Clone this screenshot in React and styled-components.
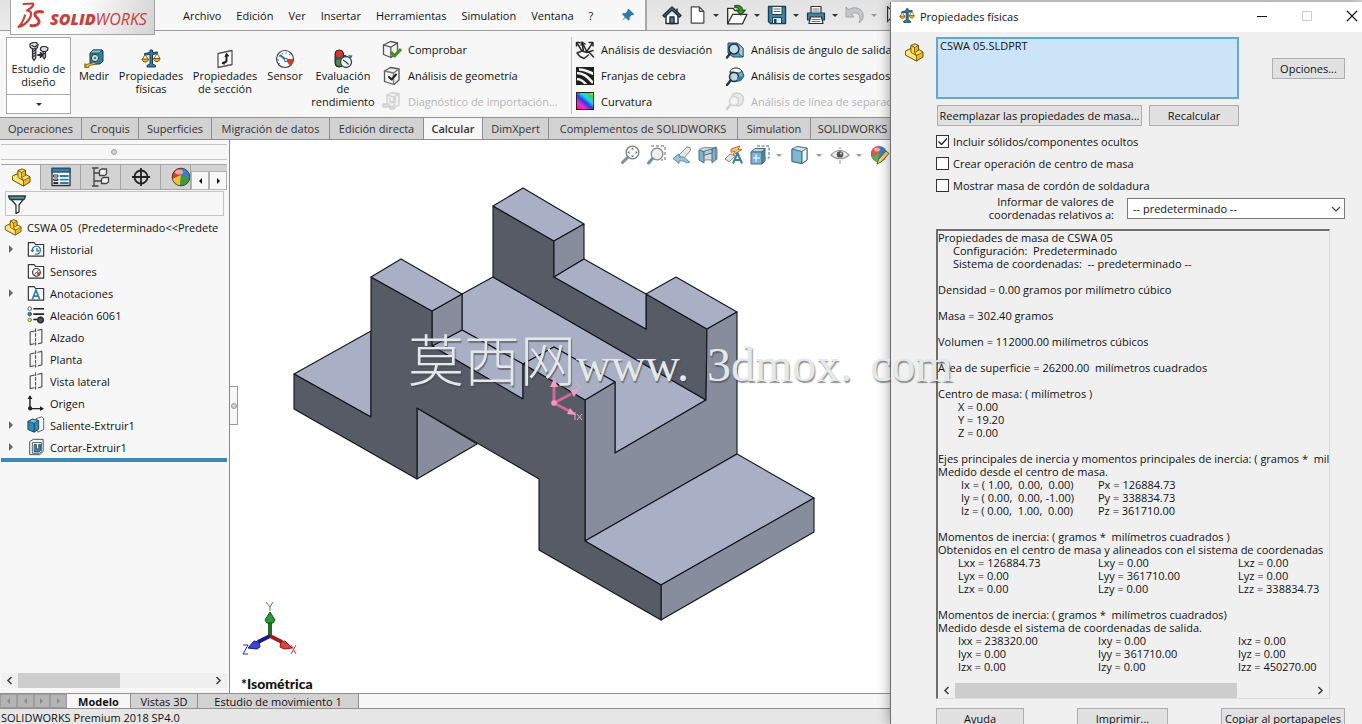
import React from "react";
import styled, { createGlobalStyle, css } from "styled-components";

const GlobalStyle = createGlobalStyle`
  *, *::before, *::after { box-sizing: border-box; }
  body {
    margin: 0;
    background: #fff;
    color: #111;
    font-family: "Open Sans", "Noto Sans", sans-serif;
    font-size: 11px;
    line-height: 13px;
  }
  button, input, select, textarea { font: inherit; color: inherit; margin: 0; }
`;

/* ---------- shared parts ---------- */

const PlainButton = styled.button`
  display: flex;
  align-items: center;
  justify-content: center;
  padding: 0;
  border: 0;
  background: none;
  white-space: nowrap;
`;

const IconSvg = styled.svg`
  display: block;
  flex: none;
  width: ${(p) => p.$size || 20}px;
  height: ${(p) => p.$size || 20}px;
  opacity: ${(p) => (p.$faded ? 0.3 : 1)};
`;

const S = { fill: "none", stroke: "#2b2f33", strokeWidth: 1.3, strokeLinejoin: "round", strokeLinecap: "round" };

const drawings = {
  bolts: (
    <g {...S} strokeWidth="1.2">
      <path fill="#ddd" d="M1 2l3-1.500h3L9 2.500 8.500 5.500 7 7H3.500L1 5z" />
      <path fill="#bbb" d="M3.500 7v9l1.500 2.500L6.800 16V7z" />
      <path d="M3.500 9.500l3-1M3.500 12l3-1M3.500 14.500l3-1M3 3.500l3 1.500 2-1.500" />
      <path strokeWidth="1.8" d="M9 13h4M11.500 11l2 2-2 2" />
      <path fill="#ddd" d="M11.500 6l2-1.500h3L19 6l-.5 2.500-2 1h-3l-2-1.500z" />
      <path fill="#bbb" d="M14 9.500V15l1.200 2 1.300-2V9.500zM14 12l2.500-.8" />
    </g>
  ),
  measure: (
    <g strokeLinejoin="round">
      <path fill="#2f7fa8" stroke="#163c55" d="M6 4l3-3h9l1 1v10l-3 3H6z" />
      <path fill="#7ec0dd" stroke="#163c55" strokeWidth=".7" d="M6 4l3-3h9l-2.500 3z" />
      <circle cx="11" cy="9" r="3.600" fill="#e9dfa6" stroke="#163c55" />
      <circle cx="11" cy="9" r="1.300" fill="#2f7fa8" />
      <path fill="#f0c937" stroke="#6b5510" strokeWidth=".8" d="M10 13.500L2 15.500v3.500l3-.8V16.500l8-1.500z" />
      <path fill="none" stroke="#6b5510" strokeWidth="1.200" d="M1 14.500V19" />
    </g>
  ),
  scales: (
    <g strokeLinejoin="round">
      <path fill="#2f7fa8" stroke="#163c55" d="M9 1h2.500v2.500l5-.5v1.500l-5 1V15l3 1.500V18H6v-1.500L9 15V5.500L3.500 6V4.500L9 3.500z" />
      <path fill="none" stroke="#7a5b11" strokeWidth=".9" d="M4 5.500L1.500 10M4 5.500L7 10M16 4.500L13 9.500M16 4.500L19 9.500" />
      <path fill="#f2b624" stroke="#7a4b08" d="M1 10h6.500c-.3 2-1.500 3-3.200 3S1.300 12 1 10zM12.500 9.500H19c-.3 2-1.500 3-3.200 3s-3-1-3.300-3z" />
    </g>
  ),
  section: (
    <g {...S}>
      <path fill="#fff" stroke="#555" d="M3 4.500L17 1.500v14L3 18.500z" />
      <path stroke="#222" strokeWidth="2" d="M11.500 6v5.500c0 1.500-1 2-3.500 2.500" />
      <path fill="#222" stroke="none" d="M11.500 3.500l2.800 3.800-5 .7zM6.500 14.200l3-2.300v4z" />
    </g>
  ),
  sensor: (
    <g>
      <circle cx="10" cy="10" r="8.500" fill="#fff" stroke="#3a4148" strokeWidth="1.200" />
      <path fill="#e0352b" d="M10 10l8.500 0a8.500 8.500 0 0 1-3.500 6.800z" />
      <path stroke="#3a4148" strokeWidth="1.200" strokeDasharray="1 2.800" fill="none" d="M4.500 15a7 7 0 1 1 11.500-8" />
      <path stroke="#2b6ea0" strokeWidth="2" d="M5 6l6 5" />
      <circle cx="11" cy="11" r="1.800" fill="#c8dcec" stroke="#2b6ea0" />
    </g>
  ),
  performance: (
    <g strokeLinejoin="round">
      <rect x="2" y="1" width="8.500" height="17" rx="4" fill="#4b4b4b" stroke="#222" />
      <circle cx="6.300" cy="5" r="3.400" fill="#d8352a" />
      <circle cx="6.300" cy="13.500" r="3.200" fill="#3f9a3a" />
      <path fill="#2b6ea0" d="M15 6l4.500.5-1.500 3z" />
      <circle cx="13" cy="13" r="5.500" fill="#eaf2f8" stroke="#39424a" strokeWidth="1.300" />
      <path stroke="#39424a" strokeWidth="1.200" fill="none" d="M13 13l-3-2M13 13l2.500 2.500M10 6.500h3" />
    </g>
  ),
  check: (
    <g {...S}>
      <path fill="#f4f4f4" stroke="#555" d="M1.500 5l7-3.500 7 1.500v9L9 17.500l-7.500-3z" />
      <path stroke="#555" d="M1.500 5l7.300 2.200L15.500 3M8.800 7.200V17" />
      <path stroke="#3f8f1d" strokeWidth="3" strokeLinecap="butt" d="M9 12l3.500 4L19 9" />
    </g>
  ),
  geometry: (
    <g {...S}>
      <path fill="#f2f2f2" stroke="#555" d="M2.500 5l6-3.500 8.500 1.500v11l-5 4.500-9.500-3z" />
      <path stroke="#777" d="M2.500 5l9 2L17 3M11.500 7v11" />
      <path stroke="#222" strokeWidth="2" d="M7 11l2.500 2.500 4.500-5" />
    </g>
  ),
  importDiag: (
    <g {...S} stroke="#777">
      <path fill="#ddd" d="M5 4l5-2.500 7 1.500v11l-5 3-7-2.500z" />
      <path d="M5 4l7 2 5-3M12 6v11M8 7v4h5V7" />
      <path fill="#aaa" d="M1 13h6v3H1zM8 15.500h3l1 2.500H8z" />
    </g>
  ),
  deviation: (
    <g {...S} strokeWidth="1.500" stroke="#2a2a2a">
      <path d="M2 13l5-2 5 1.500 6-2M5 16.500l4 2 4.500-3.500M7 11L2 3M8.500 11L7 3M12 12L8 4M11.500 12L17.500 3M5 16.500L2 13M14 12l4.500 5" />
      <path d="M1.500 6V2.500H5M6 5l1-3 3 2M14 2.500h4V6" />
    </g>
  ),
  zebra: (
    <g>
      <rect x="1" y="1" width="18" height="18" fill="#1d1d1d" />
      <g fill="none" stroke="#f3f3f3" strokeWidth="2.600">
        <path d="M4 3.500c5-.5 9 2 15 4.500M1.500 7C8 7 12 10 18 17M1.500 13c4 0 7 2 10 6" />
      </g>
      <rect x="1.500" y="1.500" width="17" height="17" fill="none" stroke="#222" />
    </g>
  ),
  curvature: (
    <g>
      <rect x="1" y="1" width="18" height="18" fill="url(#curv)" />
      <rect x="1.500" y="1.500" width="17" height="17" fill="none" stroke="#222" />
    </g>
  ),
  draft: (
    <g strokeLinejoin="round">
      <path fill="#5d9dbf" stroke="#1f4c67" d="M3 3h9l6 5v9H8l-5-4z" />
      <path fill="#a5d1e4" stroke="#1f4c67" strokeWidth=".8" d="M12 3l6 5v9l-4-3z" />
      <circle cx="9" cy="9" r="5" fill="#e3f1f8" fillOpacity=".75" stroke="#28323a" strokeWidth="1.500" />
      <path stroke="#28323a" strokeWidth="2.400" strokeLinecap="round" d="M5.500 13L2 17.500" />
    </g>
  ),
  undercut: (
    <g strokeLinejoin="round">
      <path fill="#7aa9c0" stroke="#28323a" d="M5 6c1-4 8-6 12-1l2 5-3 4-9 1z" />
      <path fill="#f2f5f7" stroke="#28323a" strokeWidth=".8" d="M5 6c1-4 8-6 12-1l-3 2-6-1z" />
      <circle cx="9" cy="11" r="4.500" fill="#cfe5ef" fillOpacity=".8" stroke="#28323a" strokeWidth="1.500" />
      <path fill="#2f7fa8" d="M12 11l7-1-3 5-4 1z" />
      <path stroke="#28323a" strokeWidth="2.400" strokeLinecap="round" d="M5.500 14.500L2 19" />
    </g>
  ),
  parting: (
    <g {...S} stroke="#777" strokeWidth="1.500">
      <path fill="#ccc" d="M7 5c2-4 9-4 11 1 1 4-1 8-4 9l-4-1" />
      <circle cx="9" cy="10" r="4.500" fill="#eee" />
      <path strokeWidth="2.400" d="M5.500 13.500L2 18" />
    </g>
  ),
  home: (
    <g {...S} stroke="#1f2a33" strokeWidth="1.400">
      <path fill="#fff" d="M4 10v8.500h12V10" />
      <path fill="#3d85ab" d="M1 10.500L10 2l9 8.500-1.500 1.500L10 5l-7.500 7z" />
      <path d="M15 4v3" />
      <path fill="#3d85ab" d="M8 12h4v6.500H8z" />
    </g>
  ),
  doc: <path {...S} fill="#fff" stroke="#444" d="M2.500 1h9l5 5v13h-14zM11.500 1v5h5" />,
  open: (
    <g {...S} strokeWidth="1.200">
      <path fill="#f8f8f0" d="M1.500 18V4h5l1.500 2h6v4" />
      <path fill="#fff" d="M1.500 18L6 9.500h13L15 18z" />
      <path fill="#3f9a2b" stroke="#245e17" d="M8 1.500c4-1 7 1 7 4h2.500L13.500 10 9.500 5.500H12c0-1.500-1.500-2.500-4-2.500z" />
    </g>
  ),
  save: (
    <g strokeLinejoin="round">
      <path fill="#3d85ab" stroke="#1b3d52" strokeWidth="1.400" d="M1.500 1.500h17v17H3.500l-2-2z" />
      <path fill="#fff" stroke="#1b3d52" d="M5 1.500h10v8H5z" />
      <path stroke="#666" d="M6.500 4h7M6.500 6.500h7" />
      <path fill="#dde8ee" stroke="#1b3d52" d="M5.500 12.500h9v6h-9z" />
      <path fill="#1b3d52" d="M7 14h2.500v4.500H7z" />
    </g>
  ),
  print: (
    <g {...S} strokeWidth="1.200">
      <path fill="#fff" d="M5 8V1.500h10V8" />
      <path fill="#3d85ab" stroke="#1b3d52" d="M1.500 8h17v7h-17z" />
      <path fill="#fff" d="M4.500 12h11l1.500 6.500H3z" />
      <path stroke="#777" d="M6 14.500h8M6 16.500h8M7 4h6M7 6h6" />
    </g>
  ),
  undo: <path fill="#c3c7ca" stroke="#999" strokeWidth=".8" d="M1 2l3 2.500C9 1 17 3 18 9c.8 4-1 7-4 9 2-4 1-9-3-10-2-.5-3 0-4.500 1L9 12H1z" />,
  cursor: <path fill="#fff" stroke="#333" strokeWidth="1.300" d="M4 1v16l4-4 3 6 2-1-3-6h6z" />,
  pin: <path fill="#2f7bab" d="M11 1l8 8-2 1.500-1.500-.5-3.500 3.500.5 3-2 1.500-4-4-6 5 5-6-4-4L3 7l3 .5L9.500 4 9 2.500z" />,
  part: (
    <g strokeLinejoin="round" stroke="#6e5004">
      <path fill="#f0b71c" d="M1.500 9L7 6.500V3.500L11 2l3.500 1.500v5l1-.5 3.500 2v5L12.500 19 1.500 13z" />
      <path fill="#ffe57d" strokeWidth=".8" d="M7 3.500L11 2l3.500 1.500L10.500 5.500zM10.500 10.500L15.500 8 19 10l-6.500 3.500zM1.500 9L7 6.500v2.500l5.500 4.500V19L1.500 13z" />
      <path fill="#ffd84a" strokeWidth=".8" d="M7 3.500l3.500 2v5l2 3L7 10.500z" />
    </g>
  ),
  props: (
    <g {...S} strokeWidth="1.300">
      <path fill="#fff" d="M1 1.500h18v17H1z" />
      <path fill="#3d85ab" stroke="#24587a" d="M1 1.500h18V5H1z" />
      <path strokeWidth="1" d="M3 8h4v2H3zM3 12h4v1.500H3zM3 15.500h4v1H3z" />
      <path stroke="#2f7bab" strokeWidth="1.800" d="M9.500 9H17M9.500 12.700H17M9.500 16H17" />
    </g>
  ),
  config: (
    <g {...S} stroke="#444">
      <path d="M3 1v18M1.500 1H7M1.500 19H7M3 6h6M3 14h7" />
      <path fill="#f4f4f4" d="M8.500 3.500l2-1.500h5v5l-2 1.500h-5zM10.500 12l2-1.500h5V15l-2 1.500h-5z" />
    </g>
  ),
  target: (
    <g fill="none" stroke="#222" strokeWidth="1.800">
      <circle cx="10" cy="10" r="6.500" />
      <path d="M10 1v18M1 10h18" />
    </g>
  ),
  appearance: (
    <g>
      <circle cx="10" cy="10" r="9" fill="#3d7fc4" />
      <path fill="#dd3b2c" d="M10 1a9 9 0 0 0-8.800 11L10 8z" />
      <path fill="#f2c232" d="M10 8l-1 11A9 9 0 0 1 1.200 12z" />
      <path fill="#3f9a3a" d="M10 8l8.800 3.500A9 9 0 0 1 9 19z" />
      <ellipse cx="8" cy="5" rx="4" ry="2.500" fill="#fff" opacity=".55" />
      <circle cx="10" cy="10" r="8.800" fill="none" stroke="#333" strokeWidth=".8" />
    </g>
  ),
  scenePaint: (
    <g strokeLinejoin="round">
      <circle cx="9" cy="9" r="8" fill="#3d7fc4" />
      <path fill="#dd5548" d="M9 1a8 8 0 0 0-7.500 11L9 8z" />
      <path fill="#5fae4c" d="M9 8L8 17a8 8 0 0 1-6.500-5z" />
      <ellipse cx="7" cy="4.500" rx="3" ry="2" fill="#fff" opacity=".5" />
      <path fill="#f3d67c" stroke="#7a5b11" d="M7 19l1.500-4.500L16 6l3 2.500-8 8.500z" />
    </g>
  ),
  filter: (
    <g {...S} stroke="#333">
      <path fill="#fff" d="M2 3h16l-6 8v7l-3 1.500V11z" />
      <path fill="#3aa0b8" d="M1.500 2h17l-1.500 3.500H3z" />
    </g>
  ),
  folder: <path {...S} fill="#fbfbfb" stroke="#333" d="M1.500 18V3H8l1.500 2h9v13z" />,
  material: (
    <g {...S}>
      <path stroke="#222" strokeWidth="1.800" strokeLinecap="butt" d="M7 3h12M7 9h12M7 15h5" />
      <circle cx="3" cy="3" r="2" fill="#fff" stroke="#555" strokeWidth="1" />
      <circle cx="3" cy="9" r="2" fill="#3d85ab" stroke="#24587a" strokeWidth="1" />
      <circle cx="3" cy="15.500" r="2" fill="#f2dd5a" stroke="#8a7a14" strokeWidth="1" />
      <circle cx="15" cy="15.500" r="3" fill="#555" stroke="#333" strokeDasharray="1.500 1" strokeWidth="2" />
    </g>
  ),
  plane: (
    <g {...S} stroke="#555">
      <path d="M3.500 4.500L8 3.500M12 2.500l4.500-1v15l-4 1M8 17.500l-4.500 1v-14" />
      <path strokeDasharray="3 2.200" d="M9.500 1v18" />
    </g>
  ),
  origin: (
    <g fill="#222">
      <path d="M2.500 4h1.600v11.500H15V17H2.500zM3.300 1L6 5.500H.6zM19 16.300L14.500 19v-5.400z" />
      <circle cx="3.500" cy="16" r="2.300" />
    </g>
  ),
  extrude: (
    <g strokeLinejoin="round">
      <path fill="#fff" stroke="#555" d="M10 3l6-2 2.500 1.500V15L12 18z" />
      <path fill="#2f88b5" stroke="#163c55" d="M1 6l5-2.500 7 1.500v9.500L8 18l-7-3z" />
      <path fill="#77bedb" stroke="#163c55" strokeWidth=".7" d="M1 6l5-2.500L13 5 8 8z" />
      <path stroke="#163c55" d="M8 8v10" />
    </g>
  ),
  cut: (
    <g strokeLinejoin="round">
      <path fill="#eef3f6" stroke="#444" d="M3 4l4-2.500h11V15l-4 3.500H3z" />
      <path fill="#fff" stroke="#555" d="M6 5h10v10l-2 2H6z" />
      <path fill="#2f88b5" stroke="#163c55" strokeWidth=".8" d="M8 7h2.500v5h2.500V7h2v7l-1.500 1.500H8z" />
    </g>
  ),
  zoomFit: (
    <g>
      <circle cx="12.500" cy="7.500" r="6.300" fill="#fff" stroke="#777" strokeWidth="1.300" />
      <path fill="#666" d="M12.500 2.500l1.500 2h-3zM12.500 12.500l1.500-2h-3zM7.500 7.500l2-1.500v3zM17.500 7.500l-2-1.500v3z" />
      <path stroke="#6b93ab" strokeWidth="3" strokeLinecap="round" d="M7.500 12.500L2.500 17.500" />
    </g>
  ),
  zoomArea: (
    <g>
      <path fill="none" stroke="#666" strokeDasharray="3 2" d="M5 1h14v14h-4" />
      <circle cx="11" cy="9" r="5.800" fill="#eee" stroke="#888" strokeWidth="1.300" />
      <path stroke="#6b93ab" strokeWidth="3" strokeLinecap="round" d="M6.500 13.500L2.500 18" />
    </g>
  ),
  prev: (
    <g strokeLinejoin="round">
      <path fill="#e6e6e6" stroke="#888" d="M7 10l8-8 3 .5.5 3L11 14z" />
      <path fill="#9cc4d9" stroke="#5e8ba3" d="M1 13.500l6-4.500v3c4-.5 7 .5 9 4l2 1-3.500 1c-2-2-4-2.500-7.500-2v2.500z" />
    </g>
  ),
  sectionView: (
    <g strokeLinejoin="round" stroke="#4f6f82">
      <path fill="#d9d9d9" stroke="#888" d="M2 4c5-3 11 0 16-2l1 2v10c-5 3-9-1-14 2z" />
      <path fill="#7fb2cc" d="M1 5l5 1.500V18l-5-3zM14 4l4-1.500v12L14 18z" />
      <path fill="#a9cfe2" d="M6 6.500c3-1.500 5-1.500 8-2.500v4c-3 1-5 1-8 2.500z" />
    </g>
  ),
  annotate: (
    <g strokeLinejoin="round">
      <path fill="#f4c27a" stroke="#b87424" d="M7 4l9-3-2 3.500h4L9 10l2-4-4 1.500z" />
      <path fill="#e3e3e3" stroke="#888" d="M1 14l5-5 5 2-6 6z" />
      <path fill="none" stroke="#3c7ca3" strokeWidth="2" d="M9 18.500L13.500 8 18 18.500M10.500 15h6" />
    </g>
  ),
  orient: (
    <g strokeLinejoin="round" stroke="#4a6b7e">
      <path fill="#fff" strokeDasharray="3 1.500" d="M7 1h12v12h-5" />
      <path fill="#b7d8e8" d="M1 7l4-3.500h10L12 7z" />
      <path fill="#7fb3cd" d="M1 7h11v12H1z" />
      <path fill="#4d89a8" d="M12 7l3-3.500V16l-3 3z" />
      <path fill="none" stroke="#fff" d="M6 9v8M3 13h7" />
    </g>
  ),
  display: (
    <g strokeLinejoin="round" stroke="#4a6b7e">
      <path fill="#cfe4ef" d="M2 4l5-2.500 10 1.500v12l-5 3.500-10-2z" />
      <path fill="#7fb6d1" d="M2 4l10 2.500v12l-10-2z" />
      <path fill="#eef6fa" d="M12 6.500L17 3v12l-5 3.500z" />
    </g>
  ),
  eye: (
    <g>
      <path fill="#eee" stroke="#999" strokeWidth="1.200" d="M1 10c5-6 13-6 18 0-5 5-13 5-18 0z" />
      <path stroke="#999" d="M10 2v2M10 15v4" />
      <circle cx="10" cy="9.500" r="3.300" fill="#555" />
      <circle cx="11" cy="8.500" r="1" fill="#ddd" />
    </g>
  ),
};

function Icon({ name, size, faded, children }) {
  return (
    <IconSvg viewBox="0 0 20 20" $size={size} $faded={faded} aria-hidden="true">
      {name === "curvature" && (
        <defs>
          <linearGradient id="curv" x1="0" y1="1" x2=".85" y2="0">
            <stop offset=".05" stopColor="#ff1a1a" />
            <stop offset=".28" stopColor="#ff2ad0" />
            <stop offset=".5" stopColor="#2c3ce0" />
            <stop offset=".68" stopColor="#1fd7e8" />
            <stop offset=".88" stopColor="#37d64a" />
            <stop offset="1" stopColor="#c9e83a" />
          </linearGradient>
        </defs>
      )}
      {drawings[name]}
      {children}
    </IconSvg>
  );
}

const Caret = styled.span`
  flex: none;
  width: 0;
  height: 0;
  border: 3px solid transparent;
  border-top-color: ${(p) => (p.$faded ? "#999" : "#333")};
  border-bottom-width: 0;
`;

/* ---------- title bar ---------- */

const Desktop = styled.div`
  position: relative;
  display: flex;
  flex-direction: column;
  height: 100vh;
  overflow: hidden;
`;

const TitleBar = styled.header`
  display: flex;
  height: 31px;
  padding-left: 10px;
  background: linear-gradient(#e2e2e2, #ebebeb);
  border-bottom: 1px solid #9b9b9b;
`;

const LogoTab = styled.div`
  position: relative;
  z-index: 1;
  width: 145px;
  height: 35px;
  flex: none;
  display: flex;
  align-items: center;
  gap: 6px;
  padding: 0 5px 4px 6px;
  background: linear-gradient(105deg, #fff 45%, #d4d4d4);
  border: solid #a5a5a5;
  border-width: 0 1px 1px;
`;

const DsMark = styled.svg`
  width: 27px;
  height: 29px;
  flex: none;
`;

const Brand = styled.span`
  padding-top: 8px;
  color: #c5413b;
  font: italic 400 16px/20px "Open Sans", sans-serif;
  b { font-weight: 800; }
`;

const MenuBar = styled.nav`
  display: flex;
  align-items: center;
  gap: 15px;
  padding: 0 10px 0 28px;
  background: #f7f7f7;
  border-right: 2px solid #a9a9a9;
`;

const PinButton = styled(PlainButton)`
  margin-left: 13px;
`;

const QuickTools = styled.div`
  display: flex;
  align-items: center;
  gap: 7px;
  padding-left: 15px;
`;

const QuickTool = styled(PlainButton)`
  gap: 6px;
`;

/* ---------- ribbon ---------- */

const Ribbon = styled.section`
  display: flex;
  height: 86px;
  flex: none;
  padding: 6px 0 3px 6px;
  background: #f7f7f7;
  overflow: hidden;
`;

const StudyButton = styled.div`
  display: flex;
  flex-direction: column;
  width: 65px;
  flex: none;
  background: #fff;
  border: 1px solid #a9a9a9;
`;

const StudyMain = styled(PlainButton)`
  flex: 1;
  flex-direction: column;
  padding-bottom: 2px;
  white-space: normal;
`;

const StudyDrop = styled(PlainButton)`
  height: 19px;
  border-top: 1px solid #a9a9a9;
`;

const BigTool = styled(PlainButton)`
  flex: none;
  flex-direction: column;
  justify-content: flex-start;
  width: ${(p) => p.$w}px;
  padding-top: 12px;
  white-space: pre-line;
`;

const ToolColumn = styled.div`
  display: flex;
  flex: none;
  flex-direction: column;
  width: ${(p) => p.$w}px;
  padding-left: ${(p) => (p.$line ? 3 : 0)}px;
  border-left: 1px solid ${(p) => (p.$line ? "#c4c4c4" : "transparent")};
`;

const SmallTool = styled(PlainButton)`
  height: 26px;
  justify-content: flex-start;
  gap: 6px;
  color: ${(p) => (p.disabled ? "#b5b5b5" : "inherit")};
`;

const TabStrip = styled.nav`
  display: flex;
  flex: none;
  height: 23px;
  background: #d2d2d2;
  border: solid #8f8f8f;
  border-width: 1px 0;
  overflow: hidden;
`;

const RibbonTab = styled(PlainButton)`
  flex: none;
  width: ${(p) => p.$w}px;
  color: #333;
  border-right: 1px solid #8f8f8f;
  ${(p) => p.$active && css`background: #f7f7f7; font-weight: 600;`}
`;

/* ---------- feature tree ---------- */

const Main = styled.main`
  display: flex;
  flex: 1;
  min-height: 0;
`;

const SidePanel = styled.aside`
  display: flex;
  flex-direction: column;
  width: 230px;
  flex: none;
  padding: 4px 2px 5px 1px;
  background: #f7f7f7;
  border-right: 1px solid #8a8a8a;
`;

const PanelGrip = styled.div`
  display: flex;
  align-items: center;
  justify-content: center;
  height: 16px;
  margin-bottom: 4px;
  border: solid #c4c4c4;
  border-width: 1px 0;
`;

const Dot = styled.span`
  width: 6px;
  height: 6px;
  border: 1px solid #9a9a9a;
  border-radius: 50%;
  background: #d5d5d5;
`;

const PanelTabs = styled.div`
  display: flex;
  height: 26px;
  background: #d2d2d2;
  border-top: 1px solid #a5a5a5;
`;

const PanelTab = styled(PlainButton)`
  width: 40px;
  flex: none;
  border-right: 1px solid #a5a5a5;
  border-bottom: 1px solid ${(p) => (p.$active ? "#f7f7f7" : "#a5a5a5")};
  background: ${(p) => (p.$active ? "#f7f7f7" : "#d2d2d2")};
  ${(p) => p.$clipped && css`
    flex: 1;
    min-width: 0;
    justify-content: flex-start;
    padding-left: 10px;
    overflow: hidden;
  `}
`;

const PanelArrow = styled(PlainButton)`
  width: 18px;
  flex: none;
  align-self: flex-end;
  height: 19px;
  background: #f7f7f7;
  border: 1px solid #b0b0b0;
`;

const SideCaret = styled.span`
  width: 0;
  height: 0;
  border: ${(p) => p.$s || 3}px solid transparent;
  ${(p) => (p.$left
    ? css`border-left-width: 0; border-right-color: ${p.$c || "#111"};`
    : css`border-right-width: 0; border-left-color: ${p.$c || "#111"};`)}
`;

const FilterBox = styled.label`
  display: flex;
  align-items: center;
  height: 25px;
  margin: 1px 3px 0 4px;
  padding: 0 1px;
  border: 1px solid #c4c4c4;
  input {
    flex: 1;
    min-width: 0;
    border: 0;
    background: none;
    outline: 0;
  }
`;

const Tree = styled.ul`
  margin: 0;
  padding: 0;
  list-style: none;
  border-bottom: 4px solid #3d89b5;
`;

const TreeRow = styled.li`
  display: flex;
  align-items: center;
  height: 22px;
  gap: 5px;
  padding-left: ${(p) => (p.$root ? 3 : 8)}px;
  white-space: pre;
  overflow: hidden;
`;

const Twisty = styled.span`
  display: flex;
  width: 13px;
  flex: none;
`;

const Spacer = styled.div`
  flex: 1;
`;

const ScrollBar = styled.div`
  display: flex;
  align-items: center;
  flex: none;
  height: 15px;
  background: #f0f0f0;
`;

const ScrollArrow = styled(PlainButton)`
  width: 17px;
  height: 15px;
  svg { width: 9px; height: 9px; }
`;

const ScrollTrack = styled.div`
  flex: 1;
  height: 15px;
`;

const ScrollThumb = styled.div`
  width: ${(p) => p.$w}%;
  height: 100%;
  background: #cdcdcd;
`;

function HScroll({ thumb }) {
  return (
    <ScrollBar>
      <ScrollArrow aria-label="Izquierda">
        <svg viewBox="0 0 9 9" fill="none" stroke="#444" strokeWidth="1.600"><path d="M6.500 1L3 4.500 6.500 8" /></svg>
      </ScrollArrow>
      <ScrollTrack><ScrollThumb $w={thumb} /></ScrollTrack>
      <ScrollArrow aria-label="Derecha">
        <svg viewBox="0 0 9 9" fill="none" stroke="#444" strokeWidth="1.600"><path d="M2.500 1L6 4.500 2.500 8" /></svg>
      </ScrollArrow>
    </ScrollBar>
  );
}

/* ---------- viewport ---------- */

const Viewport = styled.section`
  position: relative;
  flex: 1;
  min-width: 0;
  overflow: hidden;
  background: #fff;
`;

const Scene = styled.svg`
  display: block;
  width: 660px;
  height: 554px;
`;

const ViewTools = styled.div`
  position: absolute;
  top: 5px;
  left: 390px;
  display: flex;
  align-items: center;
  gap: 6px;
`;

const ViewTool = styled(PlainButton)`
  gap: 6px;
  ${(p) => p.$drop && css`margin-right: 2px;`}
`;

const SplitHandle = styled.div`
  position: absolute;
  top: 246px;
  left: 0;
  display: flex;
  align-items: center;
  justify-content: center;
  width: 8px;
  height: 39px;
  background: #f7f7f7;
  border: 1px solid #9a9a9a;
  border-left: 0;
`;

const ViewName = styled.div`
  position: absolute;
  left: 11px;
  bottom: 1px;
  color: #111;
  font: 900 14px/16px Lato, sans-serif;
`;

/* ---------- bottom strips ---------- */

const SheetStrip = styled.nav`
  display: flex;
  flex: none;
  height: 16px;
  background: #f7f7f7;
  border: solid #8f8f8f;
  border-width: 1px 0;
`;

const SheetNav = styled.div`
  display: flex;
  width: 67px;
  background: #b4b4b4;
`;

const SheetNavButton = styled(PlainButton)`
  flex: 1;
  border: 1px solid #9d9d9d;
`;

const SheetTab = styled(PlainButton)`
  width: ${(p) => p.$w}px;
  background: ${(p) => (p.$active ? "#f7f7f7" : "#d2d2d2")};
  font-weight: ${(p) => (p.$active ? 700 : 400)};
  border-right: 1px solid #8f8f8f;
`;

const StatusBar = styled.footer`
  flex: none;
  height: 15px;
  padding: 2px 1px 0;
  background: #e6e6e6;
  white-space: nowrap;
`;

/* ---------- mass properties dialog ---------- */

const Dialog = styled.section`
  position: absolute;
  top: 2px;
  right: 0;
  bottom: 0;
  display: flex;
  flex-direction: column;
  width: 472px;
  max-width: 100%;
  overflow: hidden;
  background: #f0f0f0;
  border-left: 1px solid #6f6f6f;
  box-shadow: 0 0 12px rgba(0, 0, 0, 0.4);
`;

const DialogTitle = styled.header`
  display: flex;
  align-items: center;
  height: 30px;
  flex: none;
  gap: 5px;
  padding: 0 3px 2px 8px;
  background: #fff;
  h1 {
    flex: 1;
    margin: 0;
    font-size: 11px;
    font-weight: 400;
  }
`;

const WindowButton = styled(PlainButton)`
  width: 14px;
  margin-left: 26px;
  svg { width: 12px; height: 12px; }
`;

const DialogBody = styled.div`
  display: grid;
  grid-template-columns: 45px minmax(0, 1fr);
  align-content: start;
  flex: 1;
  min-height: 0;
  padding-top: 5px;
`;

const PartCell = styled.div`
  padding: 5px 0 0 13px;
`;

const DialogForm = styled.div`
  display: flex;
  flex-direction: column;
  padding-right: 17px;
`;

const FileRow = styled.div`
  display: flex;
  align-items: center;
  justify-content: space-between;
`;

const FileBox = styled.textarea`
  display: block;
  width: 303px;
  height: 62px;
  padding: 0 2px;
  resize: none;
  outline: 0;
  background: #cce4f7;
  border: 2px solid #61a9d2;
  border-radius: 0;
`;

const PushButton = styled(PlainButton)`
  width: ${(p) => p.$w}px;
  height: 21px;
  background: #e1e1e1;
  border: 1px solid #adadad;
`;

const ButtonRow = styled.div`
  display: flex;
  gap: 7px;
  padding: 6px 0 4px 1px;
`;

const CheckLabel = styled.label`
  display: flex;
  align-items: center;
  gap: 4px;
  height: 22px;
`;

const CheckBox = styled.input`
  appearance: none;
  width: 13px;
  height: 13px;
  border: 1px solid #333;
  background: #fff;
`;

const CheckWrap = styled.span`
  position: relative;
  display: flex;
  svg {
    position: absolute;
    inset: 0;
    width: 13px;
    height: 13px;
    pointer-events: none;
  }
`;

const CoordRow = styled.label`
  display: flex;
  align-items: center;
  justify-content: flex-end;
  gap: 13px;
  height: 24px;
  text-align: right;
  white-space: pre-line;
`;

const SelectWrap = styled.span`
  position: relative;
  display: flex;
  width: 218px;
  svg {
    position: absolute;
    right: 4px;
    top: 6px;
    width: 10px;
    height: 10px;
    pointer-events: none;
  }
`;

const Select = styled.select`
  appearance: none;
  width: 100%;
  height: 21px;
  padding: 0 5px;
  background: #fff;
  border: 1px solid #7a7a7a;
  border-radius: 0;
`;

const ReportBox = styled.div`
  display: flex;
  flex-direction: column;
  height: 470px;
  margin: 9px 15px 0 0;
  border: 1px solid #dcdcdc;
  border-top: 2px solid #6d6d6d;
  border-left: 2px solid #6d6d6d;
`;

const ReportText = styled.div`
  flex: 1;
  min-height: 0;
  overflow: hidden;
  white-space: pre;
`;

const Line = styled.p`
  height: 13px;
  margin: 0;
  padding-left: ${(p) => p.$in || 0}px;
`;

const Matrix = styled.table`
  border-collapse: collapse;
  margin-left: ${(p) => p.$left || 20}px;
  td {
    width: ${(p) => p.$col || 140}px;
    height: 13px;
    padding: 0;
  }
  td:last-child { width: 90px; }
`;

const DialogButtons = styled.div`
  display: flex;
  justify-content: space-between;
  padding-top: 9px;
`;

const Watermark = styled.div`
  position: absolute;
  top: 325px;
  left: 408px;
  display: flex;
  align-items: baseline;
  color: #e4e8e8;
  font: 48px/64px "Liberation Serif", serif;
  text-shadow: 1px 2px 1px rgba(70, 72, 76, 0.6);
  white-space: nowrap;
  pointer-events: none;
  b { font: 300 56px/64px "Noto Sans CJK SC", sans-serif; }
`;

const SiteName = styled.span`
  display: flex;
  gap: 18px;
`;

/* ---------- data ---------- */

const menus = ["Archivo", "Edición", "Ver", "Insertar", "Herramientas", "Simulation", "Ventana", "?"];

const quick = [
  ["home", 20, false], ["doc", 18, true], ["open", 22, true], ["save", 20, true],
  ["print", 20, true], ["undo", 20, true], ["cursor", 18, false],
];

const bigTools = [
  ["measure", "Medir", 46],
  ["scales", "Propiedades\nfísicas", 68],
  ["section", "Propiedades\nde sección", 80],
  ["sensor", "Sensor", 40],
  ["performance", "Evaluación\nde\nrendimiento", 76],
];

const smallTools = [
  [190, false, [["check", "Comprobar"], ["geometry", "Análisis de geometría"], ["importDiag", "Diagnóstico de importación...", true]]],
  [153, true, [["deviation", "Análisis de desviación"], ["zebra", "Franjas de cebra"], ["curvature", "Curvatura"]]],
  [220, false, [["draft", "Análisis de ángulo de salida"], ["undercut", "Análisis de cortes sesgados"], ["parting", "Análisis de línea de separación", true]]],
];

const ribbonTabs = [
  ["Operaciones", 82], ["Croquis", 57], ["Superficies", 73], ["Migración de datos", 118],
  ["Edición directa", 94], ["Calcular", 59], ["DimXpert", 66], ["Complementos de SOLIDWORKS", 189],
  ["Simulation", 73], ["SOLIDWORKS MBD", 112],
];

const folderMark = {
  history: <g fill="none" stroke="#2f7bab" strokeWidth="1.500"><path d="M6 12a4.500 4.500 0 1 1 3 3.500M11 9v3h2.500" /><path fill="#2f7bab" stroke="none" d="M3.500 11h5L6 14z" /></g>,
  sensor: <g><circle cx="10.500" cy="11.500" r="4.300" fill="#fff" stroke="#333" strokeWidth="1.300" /><path fill="#d8352a" d="M10.500 11.500h4.300a4.300 4.300 0 0 1-2.500 4z" /><path stroke="#333" d="M8 14l5-5" /></g>,
  notes: <path fill="none" stroke="#2f7bab" strokeWidth="1.800" d="M6 17l4-10.500L14 17M7.500 13.500h5" />,
};

const treeRows = [
  ["folder", "Historial", true, "history"],
  ["folder", "Sensores", false, "sensor"],
  ["folder", "Anotaciones", true, "notes"],
  ["material", "Aleación 6061"],
  ["plane", "Alzado"],
  ["plane", "Planta"],
  ["plane", "Vista lateral"],
  ["origin", "Origen"],
  ["extrude", "Saliente-Extruir1", true],
  ["cut", "Cortar-Extruir1", true],
];

const viewTools = [
  ["zoomFit"], ["zoomArea"], ["prev"], ["sectionView"], ["annotate"],
  ["orient", true], ["display", true], ["eye", true], ["scenePaint"],
];

const LIGHT = "#a9b0c5";
const MID = "#878d9d";
const DARK = "#575b66";

const faces = [
  [LIGHT, "294,374 371,331 371,417"],
  [MID, "417,408 477,444 417,479"],
  [LIGHT, "493,277 706,400 615,453 615,382 554,347 523,364 462,330 462,294"],
  [DARK, "493,206 554,241 554,277 646,329 646,294 707,329 706,400 493,277"],
  [LIGHT, "493,206 523,188 584,224 554,241"],
  [MID, "554,241 584,224 584,259 554,277"],
  [LIGHT, "554,277 584,259 646,294 646,329"],
  [LIGHT, "646,294 676,277 737,312 707,329"],
  [MID, "585,400 615,382 615,453 706,400 707,329 737,312 737,454 585,541"],
  [LIGHT, "585,541 737,454 814,498 661,585"],
  [MID, "661,585 814,498 814,532 661,620"],
  [LIGHT, "432,346 462,330 523,364 523,399"],
  [MID, "432,311 462,294 462,330 432,346"],
  [LIGHT, "523,364 554,347 615,382 585,400"],
  [DARK, "371,277 432,311 432,346 523,399 523,364 585,400 585,541 661,585 661,620 539,550 539,479 417,408 417,479 294,409 294,374 371,417"],
  [LIGHT, "371,277 401,259 462,294 432,311"],
];

function Model() {
  return (
    <Scene viewBox="230 140 660 554" role="img" aria-label="CSWA 05">
      <g stroke="#12151c" strokeWidth="1.100" strokeLinejoin="round">
        {faces.map(([fill, points]) => <polygon key={points} fill={fill} points={points} />)}
      </g>
      <g stroke="#d4679a" fill="#f29cc0" strokeWidth="3">
        <path d="M554 403V384M554 403l17-9M554 403l15 8" />
        <path stroke="none" d="M554 378l4 9h-8zM579 389l-5 8-4-7zM576 415l-9-1 3-6z" />
        <circle cx="554" cy="403" r="2.800" stroke="none" />
        <path fill="none" strokeWidth="1" stroke="#f3a6c6" d="M575 412v8M577 414l5 6M582 414l-5 6M552 369l2 3 2-3M554 372v4M576 383l5 5" />
      </g>
      <g strokeLinejoin="round">
        <path stroke="#1f6b22" strokeWidth="4" d="M270 636v-18" />
        <path fill="#2c9a34" stroke="#174f1a" d="M270 612l5 8-2 3h-6l-2-3z" />
        <path stroke="#161a86" strokeWidth="4" d="M270 636l-12 6" />
        <path fill="#3a45d6" stroke="#161a86" d="M248 648l6-7 5 1 1 5-3 2z" />
        <path stroke="#a51d18" strokeWidth="4" d="M270 636l12 6" />
        <path fill="#e04437" stroke="#8c1813" d="M292 648l-7-7-4 1-1 5 4 2z" />
        <path fill="none" stroke="#3a8a3c" d="M266 602l4 5 3-5M270 607v4" />
        <path fill="none" stroke="#2430b0" d="M243 645h5l-5 9h5" />
        <path fill="none" stroke="#cf3a30" d="M291 645l5 9M296 645l-5 9" />
      </g>
    </Scene>
  );
}

const axes = [
  ["Ix = ( 1.00,  0.00,  0.00)", "Px = 126884.73"],
  ["Iy = ( 0.00,  0.00, -1.00)", "Py = 338834.73"],
  ["Iz = ( 0.00,  1.00,  0.00)", "Pz = 361710.00"],
];
const centroid = [
  ["Lxx = 126884.73", "Lxy = 0.00", "Lxz = 0.00"],
  ["Lyx = 0.00", "Lyy = 361710.00", "Lyz = 0.00"],
  ["Lzx = 0.00", "Lzy = 0.00", "Lzz = 338834.73"],
];
const output = [
  ["Ixx = 238320.00", "Ixy = 0.00", "Ixz = 0.00"],
  ["Iyx = 0.00", "Iyy = 361710.00", "Iyz = 0.00"],
  ["Izx = 0.00", "Izy = 0.00", "Izz = 450270.00"],
];

function DataTable({ rows, left, col }) {
  return (
    <Matrix $left={left} $col={col}>
      <tbody>
        {rows.map((r) => <tr key={r[0]}>{r.map((c) => <td key={c}>{c}</td>)}</tr>)}
      </tbody>
    </Matrix>
  );
}

function Check({ label, checked }) {
  return (
    <CheckLabel>
      <CheckWrap>
        <CheckBox type="checkbox" defaultChecked={checked} />
        {checked && <svg viewBox="0 0 13 13" fill="none" stroke="#222" strokeWidth="1.300"><path d="M2.500 6.500l3 3L11 3.500" /></svg>}
      </CheckWrap>
      {label}
    </CheckLabel>
  );
}

function MassDialog() {
  return (
    <Dialog role="dialog" aria-labelledby="mass-title">
      <DialogTitle>
        <Icon name="scales" size={16} />
        <h1 id="mass-title">Propiedades físicas</h1>
        <WindowButton aria-label="Minimizar"><svg viewBox="0 0 12 12" stroke="#111"><path d="M1 6.500h10" /></svg></WindowButton>
        <WindowButton aria-label="Maximizar"><svg viewBox="0 0 12 12" fill="none" stroke="#c8c8c8"><path d="M1.500 1.500h9v9h-9z" /></svg></WindowButton>
        <WindowButton aria-label="Cerrar"><svg viewBox="0 0 12 12" stroke="#111" strokeWidth="1.200"><path d="M1 1l10 10M11 1L1 11" /></svg></WindowButton>
      </DialogTitle>
      <DialogBody>
        <PartCell><Icon name="part" /></PartCell>
        <DialogForm>
          <FileRow>
            <FileBox readOnly aria-label="Pieza seleccionada" defaultValue="CSWA 05.SLDPRT" />
            <PushButton $w={73}>Opciones...</PushButton>
          </FileRow>
          <ButtonRow>
            <PushButton $w={205}>Reemplazar las propiedades de masa...</PushButton>
            <PushButton $w={90}>Recalcular</PushButton>
          </ButtonRow>
          <Check label="Incluir sólidos/componentes ocultos" checked />
          <Check label="Crear operación de centro de masa" />
          <Check label="Mostrar masa de cordón de soldadura" />
          <CoordRow>
            {"Informar de valores de\ncoordenadas relativos a:"}
            <SelectWrap>
              <Select defaultValue="p"><option value="p">-- predeterminado --</option></Select>
              <svg viewBox="0 0 10 10" fill="none" stroke="#444" strokeWidth="1.200"><path d="M1 3l4 4 4-4" /></svg>
            </SelectWrap>
          </CoordRow>
          <ReportBox>
            <ReportText>
              <Line>Propiedades de masa de CSWA 05</Line>
              <Line $in={15}>{"Configuración:  Predeterminado"}</Line>
              <Line $in={15}>{"Sistema de coordenadas:  -- predeterminado --"}</Line>
              <Line />
              <Line>Densidad = 0.00 gramos por milímetro cúbico</Line>
              <Line />
              <Line>Masa = 302.40 gramos</Line>
              <Line />
              <Line>Volumen = 112000.00 milímetros cúbicos</Line>
              <Line />
              <Line>{"Área de superficie = 26200.00  milímetros cuadrados"}</Line>
              <Line />
              <Line>Centro de masa: ( milímetros )</Line>
              <Line $in={20}>X = 0.00</Line>
              <Line $in={20}>Y = 19.20</Line>
              <Line $in={20}>Z = 0.00</Line>
              <Line />
              <Line>{"Ejes principales de inercia y momentos principales de inercia: ( gramos *  milí"}</Line>
              <Line>Medido desde el centro de masa.</Line>
              <DataTable rows={axes} left={23} col={137} />
              <Line />
              <Line>{"Momentos de inercia: ( gramos *  milímetros cuadrados )"}</Line>
              <Line>Obtenidos en el centro de masa y alineados con el sistema de coordenadas</Line>
              <DataTable rows={centroid} />
              <Line />
              <Line>{"Momentos de inercia: ( gramos *  milímetros cuadrados)"}</Line>
              <Line>Medido desde el sistema de coordenadas de salida.</Line>
              <DataTable rows={output} />
            </ReportText>
            <HScroll thumb={79} />
          </ReportBox>
          <DialogButtons>
            <PushButton $w={88}>Ayuda</PushButton>
            <PushButton $w={91}>Imprimir...</PushButton>
            <PushButton $w={124}>Copiar al portapapeles</PushButton>
          </DialogButtons>
        </DialogForm>
      </DialogBody>
    </Dialog>
  );
}

export default function App() {
  return (
    <Desktop>
      <GlobalStyle />
      <TitleBar>
        <LogoTab>
          <DsMark viewBox="0 0 27 29" fill="none" stroke="#c5413b" strokeWidth="2.200" strokeLinejoin="round" strokeLinecap="round">
            <path d="M6.500 3L16 2.500c1.500 1.500-2 5-6 7C15 9.500 15 14 12 18.500c-2.500 3.500-5.500 6-10.500 7.500 3-3 5-7 6.500-11.500" />
            <path d="M25.500 11c-4-1-8.500 0-7.500 3 .8 2.500 5 4.500 4 7.500-1 2.800-5 3.500-8 3" strokeWidth="3" />
          </DsMark>
          <Brand><b>SOLID</b>WORKS</Brand>
        </LogoTab>
        <MenuBar>
          {menus.map((m) => <PlainButton key={m}>{m}</PlainButton>)}
          <PinButton aria-label="Fijar"><Icon name="pin" size={14} /></PinButton>
        </MenuBar>
        <QuickTools>
          {quick.map(([name, size, drop]) => (
            <QuickTool key={name} aria-label={name}>
              <Icon name={name} size={size} />
              {drop && <Caret $faded={name === "undo"} />}
            </QuickTool>
          ))}
        </QuickTools>
      </TitleBar>

      <Ribbon>
        <StudyButton>
          <StudyMain><Icon name="bolts" />Estudio de diseño</StudyMain>
          <StudyDrop aria-label="Más estudios"><Caret /></StudyDrop>
        </StudyButton>
        {bigTools.map(([icon, label, w]) => (
          <BigTool key={icon} $w={w}><Icon name={icon} />{label}</BigTool>
        ))}
        {smallTools.map(([w, line, tools]) => (
          <ToolColumn key={w} $w={w} $line={line}>
            {tools.map(([icon, label, off]) => (
              <SmallTool key={label} disabled={off}><Icon name={icon} faded={off} />{label}</SmallTool>
            ))}
          </ToolColumn>
        ))}
      </Ribbon>

      <TabStrip>
        {ribbonTabs.map(([t, w]) => <RibbonTab key={t} $w={w} $active={t === "Calcular"}>{t}</RibbonTab>)}
      </TabStrip>

      <Main>
        <SidePanel>
          <PanelGrip><Dot /></PanelGrip>
          <PanelTabs>
            <PanelTab $active aria-label="Árbol de operaciones"><Icon name="part" /></PanelTab>
            <PanelTab aria-label="Propiedades"><Icon name="props" /></PanelTab>
            <PanelTab aria-label="Configuraciones"><Icon name="config" /></PanelTab>
            <PanelTab aria-label="DimXpert"><Icon name="target" /></PanelTab>
            <PanelTab $clipped aria-label="Apariencias"><Icon name="appearance" /></PanelTab>
            <PanelArrow aria-label="Anterior"><SideCaret $left /></PanelArrow>
            <PanelArrow aria-label="Siguiente"><SideCaret /></PanelArrow>
          </PanelTabs>
          <FilterBox><Icon name="filter" /><input type="text" aria-label="Filtro" /></FilterBox>
          <Tree>
            <TreeRow $root><Icon name="part" size={18} />{"CSWA 05  (Predeterminado<<Predete"}</TreeRow>
            {treeRows.map(([icon, label, open, mark]) => (
              <TreeRow key={label}>
                <Twisty>{open && <SideCaret $s={4} $c="#666" />}</Twisty>
                <Icon name={icon} size={18}>{mark && folderMark[mark]}</Icon>
                {label}
              </TreeRow>
            ))}
          </Tree>
          <Spacer />
          <HScroll thumb={53} />
        </SidePanel>
        <Viewport>
          <Model />
          <ViewTools>
            {viewTools.map(([name, drop]) => (
              <ViewTool key={name} $drop={drop} aria-label={name}>
                <Icon name={name} />
                {drop && <Caret $faded />}
              </ViewTool>
            ))}
          </ViewTools>
          <SplitHandle><Dot /></SplitHandle>
          <ViewName>*Isométrica</ViewName>
        </Viewport>
      </Main>

      <SheetStrip>
        <SheetNav>
          <SheetNavButton aria-label="Primero"><SideCaret $left $c="#888" /></SheetNavButton>
          <SheetNavButton aria-label="Anterior"><SideCaret $left $c="#888" /></SheetNavButton>
          <SheetNavButton aria-label="Siguiente"><SideCaret $c="#888" /></SheetNavButton>
          <SheetNavButton aria-label="Último"><SideCaret $c="#888" /></SheetNavButton>
        </SheetNav>
        <SheetTab $active $w={64}>Modelo</SheetTab>
        <SheetTab $w={67}>Vistas 3D</SheetTab>
        <SheetTab $w={161}>Estudio de movimiento 1</SheetTab>
      </SheetStrip>
      <StatusBar>SOLIDWORKS Premium 2018 SP4.0</StatusBar>

      <MassDialog />
      <Watermark><b>莫西网</b><SiteName><span>www.</span><span>3dmox.</span><span>com</span></SiteName></Watermark>
    </Desktop>
  );
}
